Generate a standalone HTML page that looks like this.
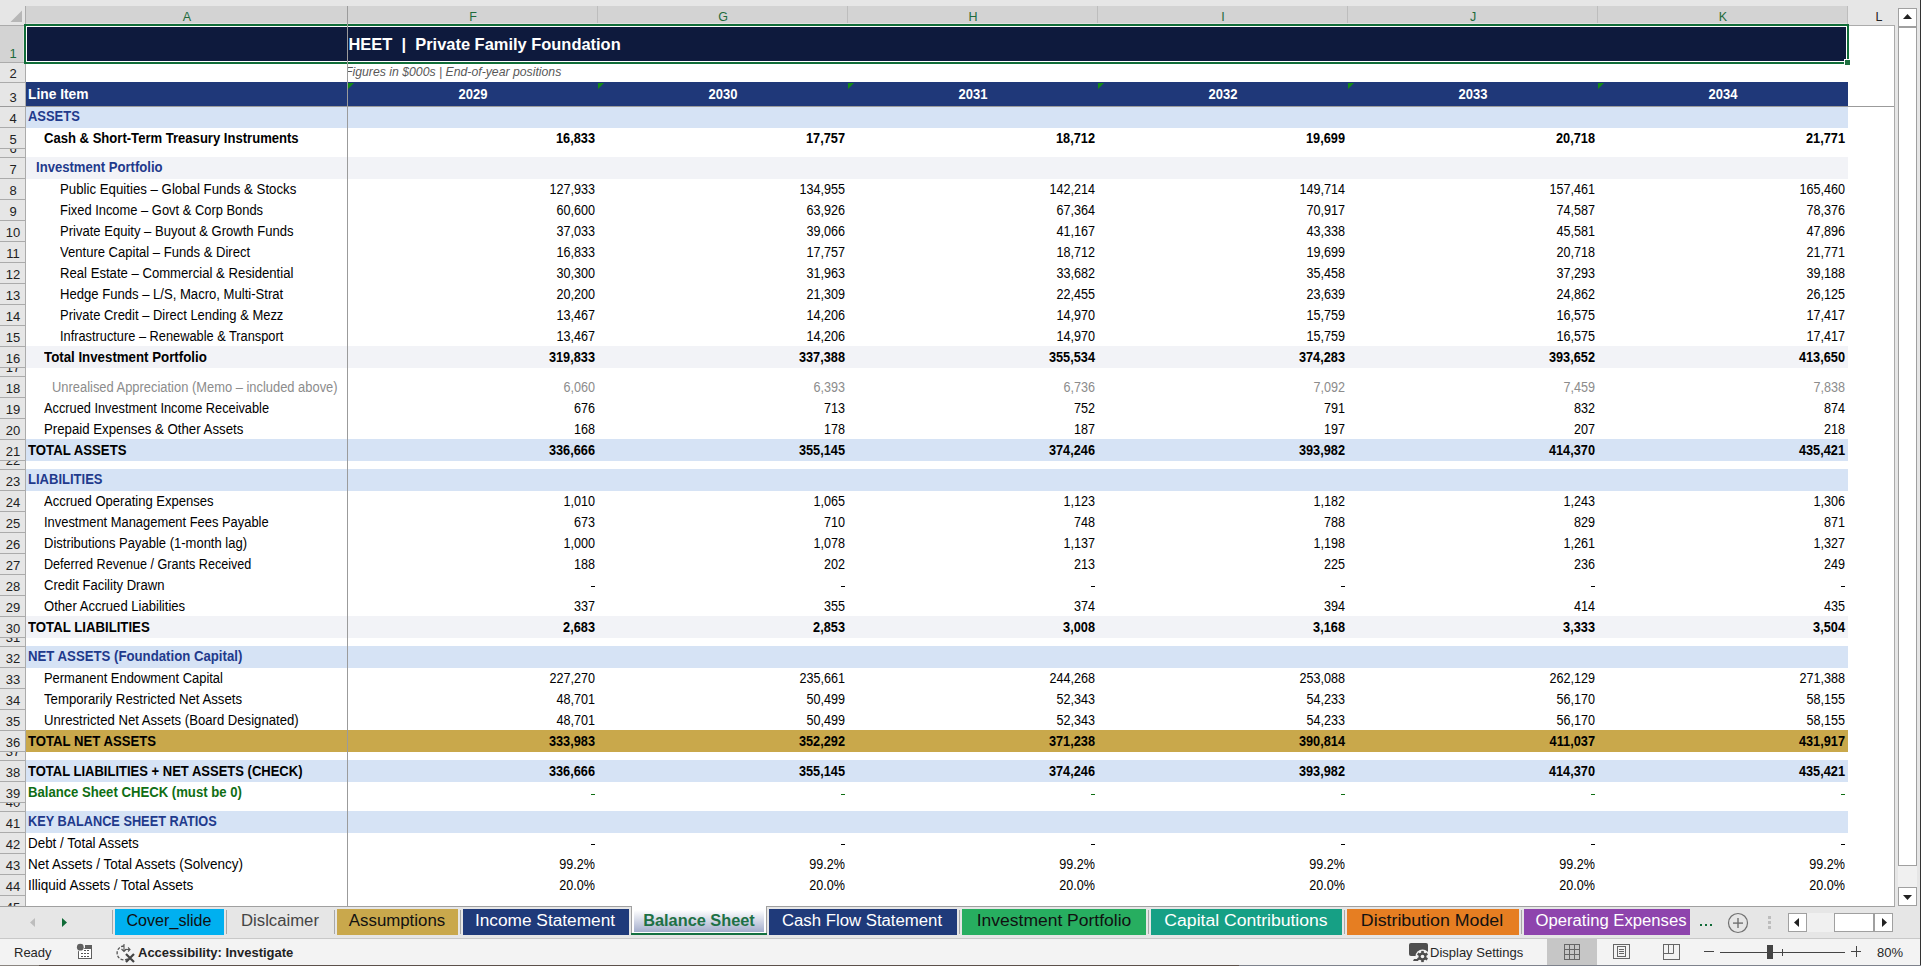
<!DOCTYPE html><html><head><meta charset="utf-8"><style>
html,body{margin:0;padding:0;}
body{width:1921px;height:966px;overflow:hidden;position:relative;background:#E6E6E6;font-family:"Liberation Sans",sans-serif;}
.t{position:absolute;white-space:pre;line-height:20px;font-family:"Liberation Sans",sans-serif;}
</style></head><body>
<div style="position:absolute;left:26px;top:26px;width:1868px;height:880px;background:#FFFFFF;"></div>
<div style="position:absolute;left:26px;top:25px;width:1822px;height:38px;background:#0E1A3D;"></div>
<div style="position:absolute;left:26px;top:82px;width:1822px;height:25px;background:#1F3879;"></div>
<div style="position:absolute;left:26px;top:106px;width:1822px;height:22px;background:#D6E3F5;"></div>
<div style="position:absolute;left:26px;top:439px;width:1822px;height:22px;background:#D6E3F5;"></div>
<div style="position:absolute;left:26px;top:469px;width:1822px;height:22px;background:#D6E3F5;"></div>
<div style="position:absolute;left:26px;top:646px;width:1822px;height:22px;background:#D6E3F5;"></div>
<div style="position:absolute;left:26px;top:760px;width:1822px;height:22px;background:#D6E3F5;"></div>
<div style="position:absolute;left:26px;top:811px;width:1822px;height:22px;background:#D6E3F5;"></div>
<div style="position:absolute;left:26px;top:157px;width:1822px;height:22px;background:#F2F3F7;"></div>
<div style="position:absolute;left:26px;top:346px;width:1822px;height:22px;background:#F2F3F7;"></div>
<div style="position:absolute;left:26px;top:616px;width:1822px;height:22px;background:#F2F3F7;"></div>
<div style="position:absolute;left:26px;top:730px;width:1822px;height:22px;background:#C9A84B;"></div>
<div style="position:absolute;left:26px;top:6px;width:1821px;height:18px;background:#D3D3D3;"></div>
<svg style="position:absolute;left:0;top:0" width="25" height="25"><polygon points="10.5,22 22,22 22,10.5" fill="#B7B7B7"/></svg>
<div style="position:absolute;left:597px;top:6px;width:1px;height:18px;background:#BDBDBD;"></div>
<div style="position:absolute;left:847px;top:6px;width:1px;height:18px;background:#BDBDBD;"></div>
<div style="position:absolute;left:1097px;top:6px;width:1px;height:18px;background:#BDBDBD;"></div>
<div style="position:absolute;left:1347px;top:6px;width:1px;height:18px;background:#BDBDBD;"></div>
<div style="position:absolute;left:1597px;top:6px;width:1px;height:18px;background:#BDBDBD;"></div>
<div style="position:absolute;left:1847px;top:6px;width:1px;height:18px;background:#BDBDBD;"></div>
<div style="position:absolute;left:25px;top:6px;width:1px;height:20px;background:#ABABAB;"></div>
<div style="position:absolute;left:0px;top:25px;width:26px;height:1px;background:#ABABAB;"></div>
<div style="position:absolute;left:1848px;top:25px;width:47px;height:1px;background:#ABABAB;"></div>
<div class="t" style="left:-13px;width:400px;text-align:center;top:6.67px;font-size:12.5px;font-weight:normal;color:#1E6B3C;">A</div>
<div class="t" style="left:273px;width:400px;text-align:center;top:6.67px;font-size:12.5px;font-weight:normal;color:#1E6B3C;">F</div>
<div class="t" style="left:523px;width:400px;text-align:center;top:6.67px;font-size:12.5px;font-weight:normal;color:#1E6B3C;">G</div>
<div class="t" style="left:773px;width:400px;text-align:center;top:6.67px;font-size:12.5px;font-weight:normal;color:#1E6B3C;">H</div>
<div class="t" style="left:1023px;width:400px;text-align:center;top:6.67px;font-size:12.5px;font-weight:normal;color:#1E6B3C;">I</div>
<div class="t" style="left:1273px;width:400px;text-align:center;top:6.67px;font-size:12.5px;font-weight:normal;color:#1E6B3C;">J</div>
<div class="t" style="left:1523px;width:400px;text-align:center;top:6.67px;font-size:12.5px;font-weight:normal;color:#1E6B3C;">K</div>
<div class="t" style="left:1679px;width:400px;text-align:center;top:6.67px;font-size:12.5px;font-weight:normal;color:#222;">L</div>
<div style="position:absolute;left:0px;top:26px;width:25px;height:880px;background:#E6E6E6;"></div>
<div style="position:absolute;left:0px;top:26px;width:25px;height:36px;background:#D3D3D3;"></div>
<div style="position:absolute;left:0px;top:62px;width:25px;height:1px;background:#ABABAB;"></div>
<div style="position:absolute;left:0px;top:82px;width:25px;height:1px;background:#ABABAB;"></div>
<div style="position:absolute;left:0px;top:106px;width:25px;height:1px;background:#ABABAB;"></div>
<div style="position:absolute;left:0px;top:127px;width:25px;height:1px;background:#ABABAB;"></div>
<div style="position:absolute;left:0px;top:148px;width:25px;height:1px;background:#ABABAB;"></div>
<div style="position:absolute;left:0px;top:157px;width:25px;height:1px;background:#ABABAB;"></div>
<div style="position:absolute;left:0px;top:178px;width:25px;height:1px;background:#ABABAB;"></div>
<div style="position:absolute;left:0px;top:199px;width:25px;height:1px;background:#ABABAB;"></div>
<div style="position:absolute;left:0px;top:220px;width:25px;height:1px;background:#ABABAB;"></div>
<div style="position:absolute;left:0px;top:241px;width:25px;height:1px;background:#ABABAB;"></div>
<div style="position:absolute;left:0px;top:262px;width:25px;height:1px;background:#ABABAB;"></div>
<div style="position:absolute;left:0px;top:283px;width:25px;height:1px;background:#ABABAB;"></div>
<div style="position:absolute;left:0px;top:304px;width:25px;height:1px;background:#ABABAB;"></div>
<div style="position:absolute;left:0px;top:325px;width:25px;height:1px;background:#ABABAB;"></div>
<div style="position:absolute;left:0px;top:346px;width:25px;height:1px;background:#ABABAB;"></div>
<div style="position:absolute;left:0px;top:367px;width:25px;height:1px;background:#ABABAB;"></div>
<div style="position:absolute;left:0px;top:376px;width:25px;height:1px;background:#ABABAB;"></div>
<div style="position:absolute;left:0px;top:397px;width:25px;height:1px;background:#ABABAB;"></div>
<div style="position:absolute;left:0px;top:418px;width:25px;height:1px;background:#ABABAB;"></div>
<div style="position:absolute;left:0px;top:439px;width:25px;height:1px;background:#ABABAB;"></div>
<div style="position:absolute;left:0px;top:460px;width:25px;height:1px;background:#ABABAB;"></div>
<div style="position:absolute;left:0px;top:469px;width:25px;height:1px;background:#ABABAB;"></div>
<div style="position:absolute;left:0px;top:490px;width:25px;height:1px;background:#ABABAB;"></div>
<div style="position:absolute;left:0px;top:511px;width:25px;height:1px;background:#ABABAB;"></div>
<div style="position:absolute;left:0px;top:532px;width:25px;height:1px;background:#ABABAB;"></div>
<div style="position:absolute;left:0px;top:553px;width:25px;height:1px;background:#ABABAB;"></div>
<div style="position:absolute;left:0px;top:574px;width:25px;height:1px;background:#ABABAB;"></div>
<div style="position:absolute;left:0px;top:595px;width:25px;height:1px;background:#ABABAB;"></div>
<div style="position:absolute;left:0px;top:616px;width:25px;height:1px;background:#ABABAB;"></div>
<div style="position:absolute;left:0px;top:637px;width:25px;height:1px;background:#ABABAB;"></div>
<div style="position:absolute;left:0px;top:646px;width:25px;height:1px;background:#ABABAB;"></div>
<div style="position:absolute;left:0px;top:667px;width:25px;height:1px;background:#ABABAB;"></div>
<div style="position:absolute;left:0px;top:688px;width:25px;height:1px;background:#ABABAB;"></div>
<div style="position:absolute;left:0px;top:709px;width:25px;height:1px;background:#ABABAB;"></div>
<div style="position:absolute;left:0px;top:730px;width:25px;height:1px;background:#ABABAB;"></div>
<div style="position:absolute;left:0px;top:751px;width:25px;height:1px;background:#ABABAB;"></div>
<div style="position:absolute;left:0px;top:760px;width:25px;height:1px;background:#ABABAB;"></div>
<div style="position:absolute;left:0px;top:781px;width:25px;height:1px;background:#ABABAB;"></div>
<div style="position:absolute;left:0px;top:802px;width:25px;height:1px;background:#ABABAB;"></div>
<div style="position:absolute;left:0px;top:811px;width:25px;height:1px;background:#ABABAB;"></div>
<div style="position:absolute;left:0px;top:832px;width:25px;height:1px;background:#ABABAB;"></div>
<div style="position:absolute;left:0px;top:853px;width:25px;height:1px;background:#ABABAB;"></div>
<div style="position:absolute;left:0px;top:874px;width:25px;height:1px;background:#ABABAB;"></div>
<div style="position:absolute;left:0px;top:895px;width:25px;height:1px;background:#ABABAB;"></div>
<div style="position:absolute;left:25px;top:26px;width:1px;height:880px;background:#ABABAB;"></div>
<div style="position:absolute;left:0;top:26px;width:25px;height:36px;overflow:hidden">
<div class="t" style="left:0;width:26px;text-align:center;top:17.50px;font-size:13px;color:#1E6B3C">1</div>
</div>
<div style="position:absolute;left:0;top:63px;width:25px;height:19px;overflow:hidden">
<div class="t" style="left:0;width:26px;text-align:center;top:0.50px;font-size:13px;color:#222">2</div>
</div>
<div style="position:absolute;left:0;top:83px;width:25px;height:23px;overflow:hidden">
<div class="t" style="left:0;width:26px;text-align:center;top:4.50px;font-size:13px;color:#222">3</div>
</div>
<div style="position:absolute;left:0;top:107px;width:25px;height:20px;overflow:hidden">
<div class="t" style="left:0;width:26px;text-align:center;top:1.50px;font-size:13px;color:#222">4</div>
</div>
<div style="position:absolute;left:0;top:128px;width:25px;height:20px;overflow:hidden">
<div class="t" style="left:0;width:26px;text-align:center;top:1.50px;font-size:13px;color:#222">5</div>
</div>
<div style="position:absolute;left:0;top:149px;width:25px;height:8px;overflow:hidden">
<div class="t" style="left:0;width:26px;text-align:center;top:-10.50px;font-size:13px;color:#222">6</div>
</div>
<div style="position:absolute;left:0;top:158px;width:25px;height:20px;overflow:hidden">
<div class="t" style="left:0;width:26px;text-align:center;top:1.50px;font-size:13px;color:#222">7</div>
</div>
<div style="position:absolute;left:0;top:179px;width:25px;height:20px;overflow:hidden">
<div class="t" style="left:0;width:26px;text-align:center;top:1.50px;font-size:13px;color:#222">8</div>
</div>
<div style="position:absolute;left:0;top:200px;width:25px;height:20px;overflow:hidden">
<div class="t" style="left:0;width:26px;text-align:center;top:1.50px;font-size:13px;color:#222">9</div>
</div>
<div style="position:absolute;left:0;top:221px;width:25px;height:20px;overflow:hidden">
<div class="t" style="left:0;width:26px;text-align:center;top:1.50px;font-size:13px;color:#222">10</div>
</div>
<div style="position:absolute;left:0;top:242px;width:25px;height:20px;overflow:hidden">
<div class="t" style="left:0;width:26px;text-align:center;top:1.50px;font-size:13px;color:#222">11</div>
</div>
<div style="position:absolute;left:0;top:263px;width:25px;height:20px;overflow:hidden">
<div class="t" style="left:0;width:26px;text-align:center;top:1.50px;font-size:13px;color:#222">12</div>
</div>
<div style="position:absolute;left:0;top:284px;width:25px;height:20px;overflow:hidden">
<div class="t" style="left:0;width:26px;text-align:center;top:1.50px;font-size:13px;color:#222">13</div>
</div>
<div style="position:absolute;left:0;top:305px;width:25px;height:20px;overflow:hidden">
<div class="t" style="left:0;width:26px;text-align:center;top:1.50px;font-size:13px;color:#222">14</div>
</div>
<div style="position:absolute;left:0;top:326px;width:25px;height:20px;overflow:hidden">
<div class="t" style="left:0;width:26px;text-align:center;top:1.50px;font-size:13px;color:#222">15</div>
</div>
<div style="position:absolute;left:0;top:347px;width:25px;height:20px;overflow:hidden">
<div class="t" style="left:0;width:26px;text-align:center;top:1.50px;font-size:13px;color:#222">16</div>
</div>
<div style="position:absolute;left:0;top:368px;width:25px;height:8px;overflow:hidden">
<div class="t" style="left:0;width:26px;text-align:center;top:-10.50px;font-size:13px;color:#222">17</div>
</div>
<div style="position:absolute;left:0;top:377px;width:25px;height:20px;overflow:hidden">
<div class="t" style="left:0;width:26px;text-align:center;top:1.50px;font-size:13px;color:#222">18</div>
</div>
<div style="position:absolute;left:0;top:398px;width:25px;height:20px;overflow:hidden">
<div class="t" style="left:0;width:26px;text-align:center;top:1.50px;font-size:13px;color:#222">19</div>
</div>
<div style="position:absolute;left:0;top:419px;width:25px;height:20px;overflow:hidden">
<div class="t" style="left:0;width:26px;text-align:center;top:1.50px;font-size:13px;color:#222">20</div>
</div>
<div style="position:absolute;left:0;top:440px;width:25px;height:20px;overflow:hidden">
<div class="t" style="left:0;width:26px;text-align:center;top:1.50px;font-size:13px;color:#222">21</div>
</div>
<div style="position:absolute;left:0;top:461px;width:25px;height:8px;overflow:hidden">
<div class="t" style="left:0;width:26px;text-align:center;top:-10.50px;font-size:13px;color:#222">22</div>
</div>
<div style="position:absolute;left:0;top:470px;width:25px;height:20px;overflow:hidden">
<div class="t" style="left:0;width:26px;text-align:center;top:1.50px;font-size:13px;color:#222">23</div>
</div>
<div style="position:absolute;left:0;top:491px;width:25px;height:20px;overflow:hidden">
<div class="t" style="left:0;width:26px;text-align:center;top:1.50px;font-size:13px;color:#222">24</div>
</div>
<div style="position:absolute;left:0;top:512px;width:25px;height:20px;overflow:hidden">
<div class="t" style="left:0;width:26px;text-align:center;top:1.50px;font-size:13px;color:#222">25</div>
</div>
<div style="position:absolute;left:0;top:533px;width:25px;height:20px;overflow:hidden">
<div class="t" style="left:0;width:26px;text-align:center;top:1.50px;font-size:13px;color:#222">26</div>
</div>
<div style="position:absolute;left:0;top:554px;width:25px;height:20px;overflow:hidden">
<div class="t" style="left:0;width:26px;text-align:center;top:1.50px;font-size:13px;color:#222">27</div>
</div>
<div style="position:absolute;left:0;top:575px;width:25px;height:20px;overflow:hidden">
<div class="t" style="left:0;width:26px;text-align:center;top:1.50px;font-size:13px;color:#222">28</div>
</div>
<div style="position:absolute;left:0;top:596px;width:25px;height:20px;overflow:hidden">
<div class="t" style="left:0;width:26px;text-align:center;top:1.50px;font-size:13px;color:#222">29</div>
</div>
<div style="position:absolute;left:0;top:617px;width:25px;height:20px;overflow:hidden">
<div class="t" style="left:0;width:26px;text-align:center;top:1.50px;font-size:13px;color:#222">30</div>
</div>
<div style="position:absolute;left:0;top:638px;width:25px;height:8px;overflow:hidden">
<div class="t" style="left:0;width:26px;text-align:center;top:-10.50px;font-size:13px;color:#222">31</div>
</div>
<div style="position:absolute;left:0;top:647px;width:25px;height:20px;overflow:hidden">
<div class="t" style="left:0;width:26px;text-align:center;top:1.50px;font-size:13px;color:#222">32</div>
</div>
<div style="position:absolute;left:0;top:668px;width:25px;height:20px;overflow:hidden">
<div class="t" style="left:0;width:26px;text-align:center;top:1.50px;font-size:13px;color:#222">33</div>
</div>
<div style="position:absolute;left:0;top:689px;width:25px;height:20px;overflow:hidden">
<div class="t" style="left:0;width:26px;text-align:center;top:1.50px;font-size:13px;color:#222">34</div>
</div>
<div style="position:absolute;left:0;top:710px;width:25px;height:20px;overflow:hidden">
<div class="t" style="left:0;width:26px;text-align:center;top:1.50px;font-size:13px;color:#222">35</div>
</div>
<div style="position:absolute;left:0;top:731px;width:25px;height:20px;overflow:hidden">
<div class="t" style="left:0;width:26px;text-align:center;top:1.50px;font-size:13px;color:#222">36</div>
</div>
<div style="position:absolute;left:0;top:752px;width:25px;height:8px;overflow:hidden">
<div class="t" style="left:0;width:26px;text-align:center;top:-10.50px;font-size:13px;color:#222">37</div>
</div>
<div style="position:absolute;left:0;top:761px;width:25px;height:20px;overflow:hidden">
<div class="t" style="left:0;width:26px;text-align:center;top:1.50px;font-size:13px;color:#222">38</div>
</div>
<div style="position:absolute;left:0;top:782px;width:25px;height:20px;overflow:hidden">
<div class="t" style="left:0;width:26px;text-align:center;top:1.50px;font-size:13px;color:#222">39</div>
</div>
<div style="position:absolute;left:0;top:803px;width:25px;height:8px;overflow:hidden">
<div class="t" style="left:0;width:26px;text-align:center;top:-10.50px;font-size:13px;color:#222">40</div>
</div>
<div style="position:absolute;left:0;top:812px;width:25px;height:20px;overflow:hidden">
<div class="t" style="left:0;width:26px;text-align:center;top:1.50px;font-size:13px;color:#222">41</div>
</div>
<div style="position:absolute;left:0;top:833px;width:25px;height:20px;overflow:hidden">
<div class="t" style="left:0;width:26px;text-align:center;top:1.50px;font-size:13px;color:#222">42</div>
</div>
<div style="position:absolute;left:0;top:854px;width:25px;height:20px;overflow:hidden">
<div class="t" style="left:0;width:26px;text-align:center;top:1.50px;font-size:13px;color:#222">43</div>
</div>
<div style="position:absolute;left:0;top:875px;width:25px;height:20px;overflow:hidden">
<div class="t" style="left:0;width:26px;text-align:center;top:1.50px;font-size:13px;color:#222">44</div>
</div>
<div style="position:absolute;left:0;top:896px;width:25px;height:10px;overflow:hidden">
<div class="t" style="left:0;width:26px;text-align:center;top:1.50px;font-size:13px;color:#222">45</div>
</div>
<div style="position:absolute;left:347px;top:6px;width:1px;height:900px;background:#9B9B9B;"></div>
<div style="position:absolute;left:0px;top:106px;width:1894px;height:1px;background:#9B9B9B;"></div>
<div style="position:absolute;left:1894px;top:25px;width:1px;height:882px;background:#ABABAB;"></div>
<div class="t" style="left:348.5px;top:34.30px;font-size:16.45px;font-weight:bold;color:#FFFFFF;">HEET  |  Private Family Foundation</div>
<div style="position:absolute;left:348px;top:63px;width:400px;height:19px;overflow:hidden">
<div class="t" style="left:-3px;top:-1.24px;font-size:12.25px;font-style:italic;color:#595959">Figures in $000s | End-of-year positions</div>
</div>
<div class="t" style="left:28px;top:85.22px;font-size:13.8px;font-weight:bold;color:#FFFFFF;">Line Item</div>
<div class="t" style="left:272.5px;width:400px;text-align:center;top:85.22px;font-size:13.8px;font-weight:bold;color:#FFFFFF;transform:scaleX(0.94);transform-origin:50% 50%;">2029</div>
<div class="t" style="left:522.5px;width:400px;text-align:center;top:85.22px;font-size:13.8px;font-weight:bold;color:#FFFFFF;transform:scaleX(0.94);transform-origin:50% 50%;">2030</div>
<div class="t" style="left:772.5px;width:400px;text-align:center;top:85.22px;font-size:13.8px;font-weight:bold;color:#FFFFFF;transform:scaleX(0.94);transform-origin:50% 50%;">2031</div>
<div class="t" style="left:1022.5px;width:400px;text-align:center;top:85.22px;font-size:13.8px;font-weight:bold;color:#FFFFFF;transform:scaleX(0.94);transform-origin:50% 50%;">2032</div>
<div class="t" style="left:1272.5px;width:400px;text-align:center;top:85.22px;font-size:13.8px;font-weight:bold;color:#FFFFFF;transform:scaleX(0.94);transform-origin:50% 50%;">2033</div>
<div class="t" style="left:1522.5px;width:400px;text-align:center;top:85.22px;font-size:13.8px;font-weight:bold;color:#FFFFFF;transform:scaleX(0.94);transform-origin:50% 50%;">2034</div>
<svg style="position:absolute;left:348px;top:83px" width="7" height="7"><polygon points="0,0 6,0 0,6" fill="#138A13"/></svg>
<svg style="position:absolute;left:598px;top:83px" width="7" height="7"><polygon points="0,0 6,0 0,6" fill="#138A13"/></svg>
<svg style="position:absolute;left:848px;top:83px" width="7" height="7"><polygon points="0,0 6,0 0,6" fill="#138A13"/></svg>
<svg style="position:absolute;left:1098px;top:83px" width="7" height="7"><polygon points="0,0 6,0 0,6" fill="#138A13"/></svg>
<svg style="position:absolute;left:1348px;top:83px" width="7" height="7"><polygon points="0,0 6,0 0,6" fill="#138A13"/></svg>
<svg style="position:absolute;left:1598px;top:83px" width="7" height="7"><polygon points="0,0 6,0 0,6" fill="#138A13"/></svg>
<div class="t" style="left:28px;top:107.22px;font-size:13.8px;font-weight:bold;color:#1F3A8C;transform:scaleX(0.9384434782608695);transform-origin:0 50%;">ASSETS</div>
<div class="t" style="left:44px;top:129.22px;font-size:13.8px;font-weight:bold;color:#000;transform:scaleX(0.9471478260869564);transform-origin:0 50%;">Cash &amp; Short-Term Treasury Instruments</div>
<div class="t" style="left:195px;width:400px;text-align:right;top:129.22px;font-size:13.8px;font-weight:bold;color:#000;transform:scaleX(0.9239130434782609);transform-origin:100% 50%;">16,833</div>
<div class="t" style="left:445px;width:400px;text-align:right;top:129.22px;font-size:13.8px;font-weight:bold;color:#000;transform:scaleX(0.9239130434782609);transform-origin:100% 50%;">17,757</div>
<div class="t" style="left:695px;width:400px;text-align:right;top:129.22px;font-size:13.8px;font-weight:bold;color:#000;transform:scaleX(0.9239130434782609);transform-origin:100% 50%;">18,712</div>
<div class="t" style="left:945px;width:400px;text-align:right;top:129.22px;font-size:13.8px;font-weight:bold;color:#000;transform:scaleX(0.9239130434782609);transform-origin:100% 50%;">19,699</div>
<div class="t" style="left:1195px;width:400px;text-align:right;top:129.22px;font-size:13.8px;font-weight:bold;color:#000;transform:scaleX(0.9239130434782609);transform-origin:100% 50%;">20,718</div>
<div class="t" style="left:1445px;width:400px;text-align:right;top:129.22px;font-size:13.8px;font-weight:bold;color:#000;transform:scaleX(0.9239130434782609);transform-origin:100% 50%;">21,771</div>
<div class="t" style="left:36px;top:158.22px;font-size:13.8px;font-weight:bold;color:#1F3A8C;transform:scaleX(0.9490608695652173);transform-origin:0 50%;">Investment Portfolio</div>
<div class="t" style="left:60px;top:180.22px;font-size:13.8px;font-weight:normal;color:#000;transform:scaleX(0.9599275362318839);transform-origin:0 50%;">Public Equities – Global Funds &amp; Stocks</div>
<div class="t" style="left:195px;width:400px;text-align:right;top:180.22px;font-size:13.8px;font-weight:normal;color:#000;transform:scaleX(0.9130434782608695);transform-origin:100% 50%;">127,933</div>
<div class="t" style="left:445px;width:400px;text-align:right;top:180.22px;font-size:13.8px;font-weight:normal;color:#000;transform:scaleX(0.9130434782608695);transform-origin:100% 50%;">134,955</div>
<div class="t" style="left:695px;width:400px;text-align:right;top:180.22px;font-size:13.8px;font-weight:normal;color:#000;transform:scaleX(0.9130434782608695);transform-origin:100% 50%;">142,214</div>
<div class="t" style="left:945px;width:400px;text-align:right;top:180.22px;font-size:13.8px;font-weight:normal;color:#000;transform:scaleX(0.9130434782608695);transform-origin:100% 50%;">149,714</div>
<div class="t" style="left:1195px;width:400px;text-align:right;top:180.22px;font-size:13.8px;font-weight:normal;color:#000;transform:scaleX(0.9130434782608695);transform-origin:100% 50%;">157,461</div>
<div class="t" style="left:1445px;width:400px;text-align:right;top:180.22px;font-size:13.8px;font-weight:normal;color:#000;transform:scaleX(0.9130434782608695);transform-origin:100% 50%;">165,460</div>
<div class="t" style="left:60px;top:201.22px;font-size:13.8px;font-weight:normal;color:#000;transform:scaleX(0.9356231884057971);transform-origin:0 50%;">Fixed Income – Govt &amp; Corp Bonds</div>
<div class="t" style="left:195px;width:400px;text-align:right;top:201.22px;font-size:13.8px;font-weight:normal;color:#000;transform:scaleX(0.9130434782608695);transform-origin:100% 50%;">60,600</div>
<div class="t" style="left:445px;width:400px;text-align:right;top:201.22px;font-size:13.8px;font-weight:normal;color:#000;transform:scaleX(0.9130434782608695);transform-origin:100% 50%;">63,926</div>
<div class="t" style="left:695px;width:400px;text-align:right;top:201.22px;font-size:13.8px;font-weight:normal;color:#000;transform:scaleX(0.9130434782608695);transform-origin:100% 50%;">67,364</div>
<div class="t" style="left:945px;width:400px;text-align:right;top:201.22px;font-size:13.8px;font-weight:normal;color:#000;transform:scaleX(0.9130434782608695);transform-origin:100% 50%;">70,917</div>
<div class="t" style="left:1195px;width:400px;text-align:right;top:201.22px;font-size:13.8px;font-weight:normal;color:#000;transform:scaleX(0.9130434782608695);transform-origin:100% 50%;">74,587</div>
<div class="t" style="left:1445px;width:400px;text-align:right;top:201.22px;font-size:13.8px;font-weight:normal;color:#000;transform:scaleX(0.9130434782608695);transform-origin:100% 50%;">78,376</div>
<div class="t" style="left:60px;top:222.22px;font-size:13.8px;font-weight:normal;color:#000;transform:scaleX(0.945231884057971);transform-origin:0 50%;">Private Equity – Buyout &amp; Growth Funds</div>
<div class="t" style="left:195px;width:400px;text-align:right;top:222.22px;font-size:13.8px;font-weight:normal;color:#000;transform:scaleX(0.9130434782608695);transform-origin:100% 50%;">37,033</div>
<div class="t" style="left:445px;width:400px;text-align:right;top:222.22px;font-size:13.8px;font-weight:normal;color:#000;transform:scaleX(0.9130434782608695);transform-origin:100% 50%;">39,066</div>
<div class="t" style="left:695px;width:400px;text-align:right;top:222.22px;font-size:13.8px;font-weight:normal;color:#000;transform:scaleX(0.9130434782608695);transform-origin:100% 50%;">41,167</div>
<div class="t" style="left:945px;width:400px;text-align:right;top:222.22px;font-size:13.8px;font-weight:normal;color:#000;transform:scaleX(0.9130434782608695);transform-origin:100% 50%;">43,338</div>
<div class="t" style="left:1195px;width:400px;text-align:right;top:222.22px;font-size:13.8px;font-weight:normal;color:#000;transform:scaleX(0.9130434782608695);transform-origin:100% 50%;">45,581</div>
<div class="t" style="left:1445px;width:400px;text-align:right;top:222.22px;font-size:13.8px;font-weight:normal;color:#000;transform:scaleX(0.9130434782608695);transform-origin:100% 50%;">47,896</div>
<div class="t" style="left:60px;top:243.22px;font-size:13.8px;font-weight:normal;color:#000;transform:scaleX(0.9459855072463768);transform-origin:0 50%;">Venture Capital – Funds &amp; Direct</div>
<div class="t" style="left:195px;width:400px;text-align:right;top:243.22px;font-size:13.8px;font-weight:normal;color:#000;transform:scaleX(0.9130434782608695);transform-origin:100% 50%;">16,833</div>
<div class="t" style="left:445px;width:400px;text-align:right;top:243.22px;font-size:13.8px;font-weight:normal;color:#000;transform:scaleX(0.9130434782608695);transform-origin:100% 50%;">17,757</div>
<div class="t" style="left:695px;width:400px;text-align:right;top:243.22px;font-size:13.8px;font-weight:normal;color:#000;transform:scaleX(0.9130434782608695);transform-origin:100% 50%;">18,712</div>
<div class="t" style="left:945px;width:400px;text-align:right;top:243.22px;font-size:13.8px;font-weight:normal;color:#000;transform:scaleX(0.9130434782608695);transform-origin:100% 50%;">19,699</div>
<div class="t" style="left:1195px;width:400px;text-align:right;top:243.22px;font-size:13.8px;font-weight:normal;color:#000;transform:scaleX(0.9130434782608695);transform-origin:100% 50%;">20,718</div>
<div class="t" style="left:1445px;width:400px;text-align:right;top:243.22px;font-size:13.8px;font-weight:normal;color:#000;transform:scaleX(0.9130434782608695);transform-origin:100% 50%;">21,771</div>
<div class="t" style="left:60px;top:264.22px;font-size:13.8px;font-weight:normal;color:#000;transform:scaleX(0.9509782608695652);transform-origin:0 50%;">Real Estate – Commercial &amp; Residential</div>
<div class="t" style="left:195px;width:400px;text-align:right;top:264.22px;font-size:13.8px;font-weight:normal;color:#000;transform:scaleX(0.9130434782608695);transform-origin:100% 50%;">30,300</div>
<div class="t" style="left:445px;width:400px;text-align:right;top:264.22px;font-size:13.8px;font-weight:normal;color:#000;transform:scaleX(0.9130434782608695);transform-origin:100% 50%;">31,963</div>
<div class="t" style="left:695px;width:400px;text-align:right;top:264.22px;font-size:13.8px;font-weight:normal;color:#000;transform:scaleX(0.9130434782608695);transform-origin:100% 50%;">33,682</div>
<div class="t" style="left:945px;width:400px;text-align:right;top:264.22px;font-size:13.8px;font-weight:normal;color:#000;transform:scaleX(0.9130434782608695);transform-origin:100% 50%;">35,458</div>
<div class="t" style="left:1195px;width:400px;text-align:right;top:264.22px;font-size:13.8px;font-weight:normal;color:#000;transform:scaleX(0.9130434782608695);transform-origin:100% 50%;">37,293</div>
<div class="t" style="left:1445px;width:400px;text-align:right;top:264.22px;font-size:13.8px;font-weight:normal;color:#000;transform:scaleX(0.9130434782608695);transform-origin:100% 50%;">39,188</div>
<div class="t" style="left:60px;top:285.22px;font-size:13.8px;font-weight:normal;color:#000;transform:scaleX(0.9480579710144927);transform-origin:0 50%;">Hedge Funds – L/S, Macro, Multi-Strat</div>
<div class="t" style="left:195px;width:400px;text-align:right;top:285.22px;font-size:13.8px;font-weight:normal;color:#000;transform:scaleX(0.9130434782608695);transform-origin:100% 50%;">20,200</div>
<div class="t" style="left:445px;width:400px;text-align:right;top:285.22px;font-size:13.8px;font-weight:normal;color:#000;transform:scaleX(0.9130434782608695);transform-origin:100% 50%;">21,309</div>
<div class="t" style="left:695px;width:400px;text-align:right;top:285.22px;font-size:13.8px;font-weight:normal;color:#000;transform:scaleX(0.9130434782608695);transform-origin:100% 50%;">22,455</div>
<div class="t" style="left:945px;width:400px;text-align:right;top:285.22px;font-size:13.8px;font-weight:normal;color:#000;transform:scaleX(0.9130434782608695);transform-origin:100% 50%;">23,639</div>
<div class="t" style="left:1195px;width:400px;text-align:right;top:285.22px;font-size:13.8px;font-weight:normal;color:#000;transform:scaleX(0.9130434782608695);transform-origin:100% 50%;">24,862</div>
<div class="t" style="left:1445px;width:400px;text-align:right;top:285.22px;font-size:13.8px;font-weight:normal;color:#000;transform:scaleX(0.9130434782608695);transform-origin:100% 50%;">26,125</div>
<div class="t" style="left:60px;top:306.22px;font-size:13.8px;font-weight:normal;color:#000;transform:scaleX(0.9395797101449274);transform-origin:0 50%;">Private Credit – Direct Lending &amp; Mezz</div>
<div class="t" style="left:195px;width:400px;text-align:right;top:306.22px;font-size:13.8px;font-weight:normal;color:#000;transform:scaleX(0.9130434782608695);transform-origin:100% 50%;">13,467</div>
<div class="t" style="left:445px;width:400px;text-align:right;top:306.22px;font-size:13.8px;font-weight:normal;color:#000;transform:scaleX(0.9130434782608695);transform-origin:100% 50%;">14,206</div>
<div class="t" style="left:695px;width:400px;text-align:right;top:306.22px;font-size:13.8px;font-weight:normal;color:#000;transform:scaleX(0.9130434782608695);transform-origin:100% 50%;">14,970</div>
<div class="t" style="left:945px;width:400px;text-align:right;top:306.22px;font-size:13.8px;font-weight:normal;color:#000;transform:scaleX(0.9130434782608695);transform-origin:100% 50%;">15,759</div>
<div class="t" style="left:1195px;width:400px;text-align:right;top:306.22px;font-size:13.8px;font-weight:normal;color:#000;transform:scaleX(0.9130434782608695);transform-origin:100% 50%;">16,575</div>
<div class="t" style="left:1445px;width:400px;text-align:right;top:306.22px;font-size:13.8px;font-weight:normal;color:#000;transform:scaleX(0.9130434782608695);transform-origin:100% 50%;">17,417</div>
<div class="t" style="left:60px;top:327.22px;font-size:13.8px;font-weight:normal;color:#000;transform:scaleX(0.9271449275362318);transform-origin:0 50%;">Infrastructure – Renewable &amp; Transport</div>
<div class="t" style="left:195px;width:400px;text-align:right;top:327.22px;font-size:13.8px;font-weight:normal;color:#000;transform:scaleX(0.9130434782608695);transform-origin:100% 50%;">13,467</div>
<div class="t" style="left:445px;width:400px;text-align:right;top:327.22px;font-size:13.8px;font-weight:normal;color:#000;transform:scaleX(0.9130434782608695);transform-origin:100% 50%;">14,206</div>
<div class="t" style="left:695px;width:400px;text-align:right;top:327.22px;font-size:13.8px;font-weight:normal;color:#000;transform:scaleX(0.9130434782608695);transform-origin:100% 50%;">14,970</div>
<div class="t" style="left:945px;width:400px;text-align:right;top:327.22px;font-size:13.8px;font-weight:normal;color:#000;transform:scaleX(0.9130434782608695);transform-origin:100% 50%;">15,759</div>
<div class="t" style="left:1195px;width:400px;text-align:right;top:327.22px;font-size:13.8px;font-weight:normal;color:#000;transform:scaleX(0.9130434782608695);transform-origin:100% 50%;">16,575</div>
<div class="t" style="left:1445px;width:400px;text-align:right;top:327.22px;font-size:13.8px;font-weight:normal;color:#000;transform:scaleX(0.9130434782608695);transform-origin:100% 50%;">17,417</div>
<div class="t" style="left:44px;top:348.22px;font-size:13.8px;font-weight:bold;color:#000;transform:scaleX(0.9624521739130434);transform-origin:0 50%;">Total Investment Portfolio</div>
<div class="t" style="left:195px;width:400px;text-align:right;top:348.22px;font-size:13.8px;font-weight:bold;color:#000;transform:scaleX(0.9239130434782609);transform-origin:100% 50%;">319,833</div>
<div class="t" style="left:445px;width:400px;text-align:right;top:348.22px;font-size:13.8px;font-weight:bold;color:#000;transform:scaleX(0.9239130434782609);transform-origin:100% 50%;">337,388</div>
<div class="t" style="left:695px;width:400px;text-align:right;top:348.22px;font-size:13.8px;font-weight:bold;color:#000;transform:scaleX(0.9239130434782609);transform-origin:100% 50%;">355,534</div>
<div class="t" style="left:945px;width:400px;text-align:right;top:348.22px;font-size:13.8px;font-weight:bold;color:#000;transform:scaleX(0.9239130434782609);transform-origin:100% 50%;">374,283</div>
<div class="t" style="left:1195px;width:400px;text-align:right;top:348.22px;font-size:13.8px;font-weight:bold;color:#000;transform:scaleX(0.9239130434782609);transform-origin:100% 50%;">393,652</div>
<div class="t" style="left:1445px;width:400px;text-align:right;top:348.22px;font-size:13.8px;font-weight:bold;color:#000;transform:scaleX(0.9239130434782609);transform-origin:100% 50%;">413,650</div>
<div class="t" style="left:52px;top:378.22px;font-size:13.8px;font-weight:normal;color:#8C8C8C;transform:scaleX(0.9355289855072463);transform-origin:0 50%;">Unrealised Appreciation (Memo – included above)</div>
<div class="t" style="left:195px;width:400px;text-align:right;top:378.22px;font-size:13.8px;font-weight:normal;color:#8C8C8C;transform:scaleX(0.9130434782608695);transform-origin:100% 50%;">6,060</div>
<div class="t" style="left:445px;width:400px;text-align:right;top:378.22px;font-size:13.8px;font-weight:normal;color:#8C8C8C;transform:scaleX(0.9130434782608695);transform-origin:100% 50%;">6,393</div>
<div class="t" style="left:695px;width:400px;text-align:right;top:378.22px;font-size:13.8px;font-weight:normal;color:#8C8C8C;transform:scaleX(0.9130434782608695);transform-origin:100% 50%;">6,736</div>
<div class="t" style="left:945px;width:400px;text-align:right;top:378.22px;font-size:13.8px;font-weight:normal;color:#8C8C8C;transform:scaleX(0.9130434782608695);transform-origin:100% 50%;">7,092</div>
<div class="t" style="left:1195px;width:400px;text-align:right;top:378.22px;font-size:13.8px;font-weight:normal;color:#8C8C8C;transform:scaleX(0.9130434782608695);transform-origin:100% 50%;">7,459</div>
<div class="t" style="left:1445px;width:400px;text-align:right;top:378.22px;font-size:13.8px;font-weight:normal;color:#8C8C8C;transform:scaleX(0.9130434782608695);transform-origin:100% 50%;">7,838</div>
<div class="t" style="left:44px;top:399.22px;font-size:13.8px;font-weight:normal;color:#000;transform:scaleX(0.9255434782608696);transform-origin:0 50%;">Accrued Investment Income Receivable</div>
<div class="t" style="left:195px;width:400px;text-align:right;top:399.22px;font-size:13.8px;font-weight:normal;color:#000;transform:scaleX(0.9130434782608695);transform-origin:100% 50%;">676</div>
<div class="t" style="left:445px;width:400px;text-align:right;top:399.22px;font-size:13.8px;font-weight:normal;color:#000;transform:scaleX(0.9130434782608695);transform-origin:100% 50%;">713</div>
<div class="t" style="left:695px;width:400px;text-align:right;top:399.22px;font-size:13.8px;font-weight:normal;color:#000;transform:scaleX(0.9130434782608695);transform-origin:100% 50%;">752</div>
<div class="t" style="left:945px;width:400px;text-align:right;top:399.22px;font-size:13.8px;font-weight:normal;color:#000;transform:scaleX(0.9130434782608695);transform-origin:100% 50%;">791</div>
<div class="t" style="left:1195px;width:400px;text-align:right;top:399.22px;font-size:13.8px;font-weight:normal;color:#000;transform:scaleX(0.9130434782608695);transform-origin:100% 50%;">832</div>
<div class="t" style="left:1445px;width:400px;text-align:right;top:399.22px;font-size:13.8px;font-weight:normal;color:#000;transform:scaleX(0.9130434782608695);transform-origin:100% 50%;">874</div>
<div class="t" style="left:44px;top:420.22px;font-size:13.8px;font-weight:normal;color:#000;transform:scaleX(0.9588913043478261);transform-origin:0 50%;">Prepaid Expenses &amp; Other Assets</div>
<div class="t" style="left:195px;width:400px;text-align:right;top:420.22px;font-size:13.8px;font-weight:normal;color:#000;transform:scaleX(0.9130434782608695);transform-origin:100% 50%;">168</div>
<div class="t" style="left:445px;width:400px;text-align:right;top:420.22px;font-size:13.8px;font-weight:normal;color:#000;transform:scaleX(0.9130434782608695);transform-origin:100% 50%;">178</div>
<div class="t" style="left:695px;width:400px;text-align:right;top:420.22px;font-size:13.8px;font-weight:normal;color:#000;transform:scaleX(0.9130434782608695);transform-origin:100% 50%;">187</div>
<div class="t" style="left:945px;width:400px;text-align:right;top:420.22px;font-size:13.8px;font-weight:normal;color:#000;transform:scaleX(0.9130434782608695);transform-origin:100% 50%;">197</div>
<div class="t" style="left:1195px;width:400px;text-align:right;top:420.22px;font-size:13.8px;font-weight:normal;color:#000;transform:scaleX(0.9130434782608695);transform-origin:100% 50%;">207</div>
<div class="t" style="left:1445px;width:400px;text-align:right;top:420.22px;font-size:13.8px;font-weight:normal;color:#000;transform:scaleX(0.9130434782608695);transform-origin:100% 50%;">218</div>
<div class="t" style="left:28px;top:441.22px;font-size:13.8px;font-weight:bold;color:#000;transform:scaleX(0.9565217391304347);transform-origin:0 50%;">TOTAL ASSETS</div>
<div class="t" style="left:195px;width:400px;text-align:right;top:441.22px;font-size:13.8px;font-weight:bold;color:#000;transform:scaleX(0.9239130434782609);transform-origin:100% 50%;">336,666</div>
<div class="t" style="left:445px;width:400px;text-align:right;top:441.22px;font-size:13.8px;font-weight:bold;color:#000;transform:scaleX(0.9239130434782609);transform-origin:100% 50%;">355,145</div>
<div class="t" style="left:695px;width:400px;text-align:right;top:441.22px;font-size:13.8px;font-weight:bold;color:#000;transform:scaleX(0.9239130434782609);transform-origin:100% 50%;">374,246</div>
<div class="t" style="left:945px;width:400px;text-align:right;top:441.22px;font-size:13.8px;font-weight:bold;color:#000;transform:scaleX(0.9239130434782609);transform-origin:100% 50%;">393,982</div>
<div class="t" style="left:1195px;width:400px;text-align:right;top:441.22px;font-size:13.8px;font-weight:bold;color:#000;transform:scaleX(0.9239130434782609);transform-origin:100% 50%;">414,370</div>
<div class="t" style="left:1445px;width:400px;text-align:right;top:441.22px;font-size:13.8px;font-weight:bold;color:#000;transform:scaleX(0.9239130434782609);transform-origin:100% 50%;">435,421</div>
<div class="t" style="left:28px;top:470.22px;font-size:13.8px;font-weight:bold;color:#1F3A8C;transform:scaleX(0.9438);transform-origin:0 50%;">LIABILITIES</div>
<div class="t" style="left:44px;top:492.22px;font-size:13.8px;font-weight:normal;color:#000;transform:scaleX(0.9448550724637679);transform-origin:0 50%;">Accrued Operating Expenses</div>
<div class="t" style="left:195px;width:400px;text-align:right;top:492.22px;font-size:13.8px;font-weight:normal;color:#000;transform:scaleX(0.9130434782608695);transform-origin:100% 50%;">1,010</div>
<div class="t" style="left:445px;width:400px;text-align:right;top:492.22px;font-size:13.8px;font-weight:normal;color:#000;transform:scaleX(0.9130434782608695);transform-origin:100% 50%;">1,065</div>
<div class="t" style="left:695px;width:400px;text-align:right;top:492.22px;font-size:13.8px;font-weight:normal;color:#000;transform:scaleX(0.9130434782608695);transform-origin:100% 50%;">1,123</div>
<div class="t" style="left:945px;width:400px;text-align:right;top:492.22px;font-size:13.8px;font-weight:normal;color:#000;transform:scaleX(0.9130434782608695);transform-origin:100% 50%;">1,182</div>
<div class="t" style="left:1195px;width:400px;text-align:right;top:492.22px;font-size:13.8px;font-weight:normal;color:#000;transform:scaleX(0.9130434782608695);transform-origin:100% 50%;">1,243</div>
<div class="t" style="left:1445px;width:400px;text-align:right;top:492.22px;font-size:13.8px;font-weight:normal;color:#000;transform:scaleX(0.9130434782608695);transform-origin:100% 50%;">1,306</div>
<div class="t" style="left:44px;top:513.22px;font-size:13.8px;font-weight:normal;color:#000;transform:scaleX(0.9358115942028985);transform-origin:0 50%;">Investment Management Fees Payable</div>
<div class="t" style="left:195px;width:400px;text-align:right;top:513.22px;font-size:13.8px;font-weight:normal;color:#000;transform:scaleX(0.9130434782608695);transform-origin:100% 50%;">673</div>
<div class="t" style="left:445px;width:400px;text-align:right;top:513.22px;font-size:13.8px;font-weight:normal;color:#000;transform:scaleX(0.9130434782608695);transform-origin:100% 50%;">710</div>
<div class="t" style="left:695px;width:400px;text-align:right;top:513.22px;font-size:13.8px;font-weight:normal;color:#000;transform:scaleX(0.9130434782608695);transform-origin:100% 50%;">748</div>
<div class="t" style="left:945px;width:400px;text-align:right;top:513.22px;font-size:13.8px;font-weight:normal;color:#000;transform:scaleX(0.9130434782608695);transform-origin:100% 50%;">788</div>
<div class="t" style="left:1195px;width:400px;text-align:right;top:513.22px;font-size:13.8px;font-weight:normal;color:#000;transform:scaleX(0.9130434782608695);transform-origin:100% 50%;">829</div>
<div class="t" style="left:1445px;width:400px;text-align:right;top:513.22px;font-size:13.8px;font-weight:normal;color:#000;transform:scaleX(0.9130434782608695);transform-origin:100% 50%;">871</div>
<div class="t" style="left:44px;top:534.22px;font-size:13.8px;font-weight:normal;color:#000;transform:scaleX(0.9420289855072463);transform-origin:0 50%;">Distributions Payable (1-month lag)</div>
<div class="t" style="left:195px;width:400px;text-align:right;top:534.22px;font-size:13.8px;font-weight:normal;color:#000;transform:scaleX(0.9130434782608695);transform-origin:100% 50%;">1,000</div>
<div class="t" style="left:445px;width:400px;text-align:right;top:534.22px;font-size:13.8px;font-weight:normal;color:#000;transform:scaleX(0.9130434782608695);transform-origin:100% 50%;">1,078</div>
<div class="t" style="left:695px;width:400px;text-align:right;top:534.22px;font-size:13.8px;font-weight:normal;color:#000;transform:scaleX(0.9130434782608695);transform-origin:100% 50%;">1,137</div>
<div class="t" style="left:945px;width:400px;text-align:right;top:534.22px;font-size:13.8px;font-weight:normal;color:#000;transform:scaleX(0.9130434782608695);transform-origin:100% 50%;">1,198</div>
<div class="t" style="left:1195px;width:400px;text-align:right;top:534.22px;font-size:13.8px;font-weight:normal;color:#000;transform:scaleX(0.9130434782608695);transform-origin:100% 50%;">1,261</div>
<div class="t" style="left:1445px;width:400px;text-align:right;top:534.22px;font-size:13.8px;font-weight:normal;color:#000;transform:scaleX(0.9130434782608695);transform-origin:100% 50%;">1,327</div>
<div class="t" style="left:44px;top:555.22px;font-size:13.8px;font-weight:normal;color:#000;transform:scaleX(0.9132971014492753);transform-origin:0 50%;">Deferred Revenue / Grants Received</div>
<div class="t" style="left:195px;width:400px;text-align:right;top:555.22px;font-size:13.8px;font-weight:normal;color:#000;transform:scaleX(0.9130434782608695);transform-origin:100% 50%;">188</div>
<div class="t" style="left:445px;width:400px;text-align:right;top:555.22px;font-size:13.8px;font-weight:normal;color:#000;transform:scaleX(0.9130434782608695);transform-origin:100% 50%;">202</div>
<div class="t" style="left:695px;width:400px;text-align:right;top:555.22px;font-size:13.8px;font-weight:normal;color:#000;transform:scaleX(0.9130434782608695);transform-origin:100% 50%;">213</div>
<div class="t" style="left:945px;width:400px;text-align:right;top:555.22px;font-size:13.8px;font-weight:normal;color:#000;transform:scaleX(0.9130434782608695);transform-origin:100% 50%;">225</div>
<div class="t" style="left:1195px;width:400px;text-align:right;top:555.22px;font-size:13.8px;font-weight:normal;color:#000;transform:scaleX(0.9130434782608695);transform-origin:100% 50%;">236</div>
<div class="t" style="left:1445px;width:400px;text-align:right;top:555.22px;font-size:13.8px;font-weight:normal;color:#000;transform:scaleX(0.9130434782608695);transform-origin:100% 50%;">249</div>
<div class="t" style="left:44px;top:576.22px;font-size:13.8px;font-weight:normal;color:#000;transform:scaleX(0.9459855072463768);transform-origin:0 50%;">Credit Facility Drawn</div>
<div style="position:absolute;left:591px;top:586px;width:4px;height:1px;background:#000;"></div>
<div style="position:absolute;left:841px;top:586px;width:4px;height:1px;background:#000;"></div>
<div style="position:absolute;left:1091px;top:586px;width:4px;height:1px;background:#000;"></div>
<div style="position:absolute;left:1341px;top:586px;width:4px;height:1px;background:#000;"></div>
<div style="position:absolute;left:1591px;top:586px;width:4px;height:1px;background:#000;"></div>
<div style="position:absolute;left:1841px;top:586px;width:4px;height:1px;background:#000;"></div>
<div class="t" style="left:44px;top:597.22px;font-size:13.8px;font-weight:normal;color:#000;transform:scaleX(0.9487173913043478);transform-origin:0 50%;">Other Accrued Liabilities</div>
<div class="t" style="left:195px;width:400px;text-align:right;top:597.22px;font-size:13.8px;font-weight:normal;color:#000;transform:scaleX(0.9130434782608695);transform-origin:100% 50%;">337</div>
<div class="t" style="left:445px;width:400px;text-align:right;top:597.22px;font-size:13.8px;font-weight:normal;color:#000;transform:scaleX(0.9130434782608695);transform-origin:100% 50%;">355</div>
<div class="t" style="left:695px;width:400px;text-align:right;top:597.22px;font-size:13.8px;font-weight:normal;color:#000;transform:scaleX(0.9130434782608695);transform-origin:100% 50%;">374</div>
<div class="t" style="left:945px;width:400px;text-align:right;top:597.22px;font-size:13.8px;font-weight:normal;color:#000;transform:scaleX(0.9130434782608695);transform-origin:100% 50%;">394</div>
<div class="t" style="left:1195px;width:400px;text-align:right;top:597.22px;font-size:13.8px;font-weight:normal;color:#000;transform:scaleX(0.9130434782608695);transform-origin:100% 50%;">414</div>
<div class="t" style="left:1445px;width:400px;text-align:right;top:597.22px;font-size:13.8px;font-weight:normal;color:#000;transform:scaleX(0.9130434782608695);transform-origin:100% 50%;">435</div>
<div class="t" style="left:28px;top:618.22px;font-size:13.8px;font-weight:bold;color:#000;transform:scaleX(0.9565217391304347);transform-origin:0 50%;">TOTAL LIABILITIES</div>
<div class="t" style="left:195px;width:400px;text-align:right;top:618.22px;font-size:13.8px;font-weight:bold;color:#000;transform:scaleX(0.9239130434782609);transform-origin:100% 50%;">2,683</div>
<div class="t" style="left:445px;width:400px;text-align:right;top:618.22px;font-size:13.8px;font-weight:bold;color:#000;transform:scaleX(0.9239130434782609);transform-origin:100% 50%;">2,853</div>
<div class="t" style="left:695px;width:400px;text-align:right;top:618.22px;font-size:13.8px;font-weight:bold;color:#000;transform:scaleX(0.9239130434782609);transform-origin:100% 50%;">3,008</div>
<div class="t" style="left:945px;width:400px;text-align:right;top:618.22px;font-size:13.8px;font-weight:bold;color:#000;transform:scaleX(0.9239130434782609);transform-origin:100% 50%;">3,168</div>
<div class="t" style="left:1195px;width:400px;text-align:right;top:618.22px;font-size:13.8px;font-weight:bold;color:#000;transform:scaleX(0.9239130434782609);transform-origin:100% 50%;">3,333</div>
<div class="t" style="left:1445px;width:400px;text-align:right;top:618.22px;font-size:13.8px;font-weight:bold;color:#000;transform:scaleX(0.9239130434782609);transform-origin:100% 50%;">3,504</div>
<div class="t" style="left:28px;top:647.22px;font-size:13.8px;font-weight:bold;color:#1F3A8C;transform:scaleX(0.9565217391304347);transform-origin:0 50%;">NET ASSETS (Foundation Capital)</div>
<div class="t" style="left:44px;top:669.22px;font-size:13.8px;font-weight:normal;color:#000;transform:scaleX(0.9368478260869566);transform-origin:0 50%;">Permanent Endowment Capital</div>
<div class="t" style="left:195px;width:400px;text-align:right;top:669.22px;font-size:13.8px;font-weight:normal;color:#000;transform:scaleX(0.9130434782608695);transform-origin:100% 50%;">227,270</div>
<div class="t" style="left:445px;width:400px;text-align:right;top:669.22px;font-size:13.8px;font-weight:normal;color:#000;transform:scaleX(0.9130434782608695);transform-origin:100% 50%;">235,661</div>
<div class="t" style="left:695px;width:400px;text-align:right;top:669.22px;font-size:13.8px;font-weight:normal;color:#000;transform:scaleX(0.9130434782608695);transform-origin:100% 50%;">244,268</div>
<div class="t" style="left:945px;width:400px;text-align:right;top:669.22px;font-size:13.8px;font-weight:normal;color:#000;transform:scaleX(0.9130434782608695);transform-origin:100% 50%;">253,088</div>
<div class="t" style="left:1195px;width:400px;text-align:right;top:669.22px;font-size:13.8px;font-weight:normal;color:#000;transform:scaleX(0.9130434782608695);transform-origin:100% 50%;">262,129</div>
<div class="t" style="left:1445px;width:400px;text-align:right;top:669.22px;font-size:13.8px;font-weight:normal;color:#000;transform:scaleX(0.9130434782608695);transform-origin:100% 50%;">271,388</div>
<div class="t" style="left:44px;top:690.22px;font-size:13.8px;font-weight:normal;color:#000;transform:scaleX(0.9564420289855073);transform-origin:0 50%;">Temporarily Restricted Net Assets</div>
<div class="t" style="left:195px;width:400px;text-align:right;top:690.22px;font-size:13.8px;font-weight:normal;color:#000;transform:scaleX(0.9130434782608695);transform-origin:100% 50%;">48,701</div>
<div class="t" style="left:445px;width:400px;text-align:right;top:690.22px;font-size:13.8px;font-weight:normal;color:#000;transform:scaleX(0.9130434782608695);transform-origin:100% 50%;">50,499</div>
<div class="t" style="left:695px;width:400px;text-align:right;top:690.22px;font-size:13.8px;font-weight:normal;color:#000;transform:scaleX(0.9130434782608695);transform-origin:100% 50%;">52,343</div>
<div class="t" style="left:945px;width:400px;text-align:right;top:690.22px;font-size:13.8px;font-weight:normal;color:#000;transform:scaleX(0.9130434782608695);transform-origin:100% 50%;">54,233</div>
<div class="t" style="left:1195px;width:400px;text-align:right;top:690.22px;font-size:13.8px;font-weight:normal;color:#000;transform:scaleX(0.9130434782608695);transform-origin:100% 50%;">56,170</div>
<div class="t" style="left:1445px;width:400px;text-align:right;top:690.22px;font-size:13.8px;font-weight:normal;color:#000;transform:scaleX(0.9130434782608695);transform-origin:100% 50%;">58,155</div>
<div class="t" style="left:44px;top:711.22px;font-size:13.8px;font-weight:normal;color:#000;transform:scaleX(0.951355072463768);transform-origin:0 50%;">Unrestricted Net Assets (Board Designated)</div>
<div class="t" style="left:195px;width:400px;text-align:right;top:711.22px;font-size:13.8px;font-weight:normal;color:#000;transform:scaleX(0.9130434782608695);transform-origin:100% 50%;">48,701</div>
<div class="t" style="left:445px;width:400px;text-align:right;top:711.22px;font-size:13.8px;font-weight:normal;color:#000;transform:scaleX(0.9130434782608695);transform-origin:100% 50%;">50,499</div>
<div class="t" style="left:695px;width:400px;text-align:right;top:711.22px;font-size:13.8px;font-weight:normal;color:#000;transform:scaleX(0.9130434782608695);transform-origin:100% 50%;">52,343</div>
<div class="t" style="left:945px;width:400px;text-align:right;top:711.22px;font-size:13.8px;font-weight:normal;color:#000;transform:scaleX(0.9130434782608695);transform-origin:100% 50%;">54,233</div>
<div class="t" style="left:1195px;width:400px;text-align:right;top:711.22px;font-size:13.8px;font-weight:normal;color:#000;transform:scaleX(0.9130434782608695);transform-origin:100% 50%;">56,170</div>
<div class="t" style="left:1445px;width:400px;text-align:right;top:711.22px;font-size:13.8px;font-weight:normal;color:#000;transform:scaleX(0.9130434782608695);transform-origin:100% 50%;">58,155</div>
<div class="t" style="left:28px;top:732.22px;font-size:13.8px;font-weight:bold;color:#000;transform:scaleX(0.952791304347826);transform-origin:0 50%;">TOTAL NET ASSETS</div>
<div class="t" style="left:195px;width:400px;text-align:right;top:732.22px;font-size:13.8px;font-weight:bold;color:#000;transform:scaleX(0.9239130434782609);transform-origin:100% 50%;">333,983</div>
<div class="t" style="left:445px;width:400px;text-align:right;top:732.22px;font-size:13.8px;font-weight:bold;color:#000;transform:scaleX(0.9239130434782609);transform-origin:100% 50%;">352,292</div>
<div class="t" style="left:695px;width:400px;text-align:right;top:732.22px;font-size:13.8px;font-weight:bold;color:#000;transform:scaleX(0.9239130434782609);transform-origin:100% 50%;">371,238</div>
<div class="t" style="left:945px;width:400px;text-align:right;top:732.22px;font-size:13.8px;font-weight:bold;color:#000;transform:scaleX(0.9239130434782609);transform-origin:100% 50%;">390,814</div>
<div class="t" style="left:1195px;width:400px;text-align:right;top:732.22px;font-size:13.8px;font-weight:bold;color:#000;transform:scaleX(0.9239130434782609);transform-origin:100% 50%;">411,037</div>
<div class="t" style="left:1445px;width:400px;text-align:right;top:732.22px;font-size:13.8px;font-weight:bold;color:#000;transform:scaleX(0.9239130434782609);transform-origin:100% 50%;">431,917</div>
<div class="t" style="left:28px;top:762.22px;font-size:13.8px;font-weight:bold;color:#000;transform:scaleX(0.9427478260869564);transform-origin:0 50%;">TOTAL LIABILITIES + NET ASSETS (CHECK)</div>
<div class="t" style="left:195px;width:400px;text-align:right;top:762.22px;font-size:13.8px;font-weight:bold;color:#000;transform:scaleX(0.9239130434782609);transform-origin:100% 50%;">336,666</div>
<div class="t" style="left:445px;width:400px;text-align:right;top:762.22px;font-size:13.8px;font-weight:bold;color:#000;transform:scaleX(0.9239130434782609);transform-origin:100% 50%;">355,145</div>
<div class="t" style="left:695px;width:400px;text-align:right;top:762.22px;font-size:13.8px;font-weight:bold;color:#000;transform:scaleX(0.9239130434782609);transform-origin:100% 50%;">374,246</div>
<div class="t" style="left:945px;width:400px;text-align:right;top:762.22px;font-size:13.8px;font-weight:bold;color:#000;transform:scaleX(0.9239130434782609);transform-origin:100% 50%;">393,982</div>
<div class="t" style="left:1195px;width:400px;text-align:right;top:762.22px;font-size:13.8px;font-weight:bold;color:#000;transform:scaleX(0.9239130434782609);transform-origin:100% 50%;">414,370</div>
<div class="t" style="left:1445px;width:400px;text-align:right;top:762.22px;font-size:13.8px;font-weight:bold;color:#000;transform:scaleX(0.9239130434782609);transform-origin:100% 50%;">435,421</div>
<div class="t" style="left:28px;top:783.22px;font-size:13.8px;font-weight:bold;color:#0F6E14;transform:scaleX(0.9520260869565217);transform-origin:0 50%;">Balance Sheet CHECK (must be 0)</div>
<div style="position:absolute;left:591px;top:794px;width:4px;height:1px;background:#0F6E14;"></div>
<div style="position:absolute;left:841px;top:794px;width:4px;height:1px;background:#0F6E14;"></div>
<div style="position:absolute;left:1091px;top:794px;width:4px;height:1px;background:#0F6E14;"></div>
<div style="position:absolute;left:1341px;top:794px;width:4px;height:1px;background:#0F6E14;"></div>
<div style="position:absolute;left:1591px;top:794px;width:4px;height:1px;background:#0F6E14;"></div>
<div style="position:absolute;left:1841px;top:794px;width:4px;height:1px;background:#0F6E14;"></div>
<div class="t" style="left:28px;top:812.22px;font-size:13.8px;font-weight:bold;color:#1F3A8C;transform:scaleX(0.9241913043478259);transform-origin:0 50%;">KEY BALANCE SHEET RATIOS</div>
<div class="t" style="left:28px;top:834.22px;font-size:13.8px;font-weight:normal;color:#000;transform:scaleX(0.9717028985507247);transform-origin:0 50%;">Debt / Total Assets</div>
<div style="position:absolute;left:591px;top:844px;width:4px;height:1px;background:#000;"></div>
<div style="position:absolute;left:841px;top:844px;width:4px;height:1px;background:#000;"></div>
<div style="position:absolute;left:1091px;top:844px;width:4px;height:1px;background:#000;"></div>
<div style="position:absolute;left:1341px;top:844px;width:4px;height:1px;background:#000;"></div>
<div style="position:absolute;left:1591px;top:844px;width:4px;height:1px;background:#000;"></div>
<div style="position:absolute;left:1841px;top:844px;width:4px;height:1px;background:#000;"></div>
<div class="t" style="left:28px;top:855.22px;font-size:13.8px;font-weight:normal;color:#000;transform:scaleX(0.978391304347826);transform-origin:0 50%;">Net Assets / Total Assets (Solvency)</div>
<div class="t" style="left:195px;width:400px;text-align:right;top:855.22px;font-size:13.8px;font-weight:normal;color:#000;transform:scaleX(0.9130434782608695);transform-origin:100% 50%;">99.2%</div>
<div class="t" style="left:445px;width:400px;text-align:right;top:855.22px;font-size:13.8px;font-weight:normal;color:#000;transform:scaleX(0.9130434782608695);transform-origin:100% 50%;">99.2%</div>
<div class="t" style="left:695px;width:400px;text-align:right;top:855.22px;font-size:13.8px;font-weight:normal;color:#000;transform:scaleX(0.9130434782608695);transform-origin:100% 50%;">99.2%</div>
<div class="t" style="left:945px;width:400px;text-align:right;top:855.22px;font-size:13.8px;font-weight:normal;color:#000;transform:scaleX(0.9130434782608695);transform-origin:100% 50%;">99.2%</div>
<div class="t" style="left:1195px;width:400px;text-align:right;top:855.22px;font-size:13.8px;font-weight:normal;color:#000;transform:scaleX(0.9130434782608695);transform-origin:100% 50%;">99.2%</div>
<div class="t" style="left:1445px;width:400px;text-align:right;top:855.22px;font-size:13.8px;font-weight:normal;color:#000;transform:scaleX(0.9130434782608695);transform-origin:100% 50%;">99.2%</div>
<div class="t" style="left:28px;top:876.22px;font-size:13.8px;font-weight:normal;color:#000;transform:scaleX(0.981123188405797);transform-origin:0 50%;">Illiquid Assets / Total Assets</div>
<div class="t" style="left:195px;width:400px;text-align:right;top:876.22px;font-size:13.8px;font-weight:normal;color:#000;transform:scaleX(0.9130434782608695);transform-origin:100% 50%;">20.0%</div>
<div class="t" style="left:445px;width:400px;text-align:right;top:876.22px;font-size:13.8px;font-weight:normal;color:#000;transform:scaleX(0.9130434782608695);transform-origin:100% 50%;">20.0%</div>
<div class="t" style="left:695px;width:400px;text-align:right;top:876.22px;font-size:13.8px;font-weight:normal;color:#000;transform:scaleX(0.9130434782608695);transform-origin:100% 50%;">20.0%</div>
<div class="t" style="left:945px;width:400px;text-align:right;top:876.22px;font-size:13.8px;font-weight:normal;color:#000;transform:scaleX(0.9130434782608695);transform-origin:100% 50%;">20.0%</div>
<div class="t" style="left:1195px;width:400px;text-align:right;top:876.22px;font-size:13.8px;font-weight:normal;color:#000;transform:scaleX(0.9130434782608695);transform-origin:100% 50%;">20.0%</div>
<div class="t" style="left:1445px;width:400px;text-align:right;top:876.22px;font-size:13.8px;font-weight:normal;color:#000;transform:scaleX(0.9130434782608695);transform-origin:100% 50%;">20.0%</div>
<div style="position:absolute;left:26px;top:23px;width:1821px;height:1px;background:#E4E1E1;"></div>
<div style="position:absolute;left:23px;top:26px;width:1px;height:36px;background:#E4E1E1;"></div>
<div style="position:absolute;left:24px;top:24px;width:1825px;height:2px;background:#106D38;"></div>
<div style="position:absolute;left:24px;top:24px;width:2px;height:40px;background:#106D38;"></div>
<div style="position:absolute;left:24px;top:62px;width:1820px;height:2px;background:#106D38;"></div>
<div style="position:absolute;left:1847px;top:24px;width:2px;height:35px;background:#106D38;"></div>
<div style="position:absolute;left:26px;top:26px;width:1821px;height:1px;background:#FFFFFF;"></div>
<div style="position:absolute;left:26px;top:26px;width:1px;height:36px;background:#FFFFFF;"></div>
<div style="position:absolute;left:26px;top:61px;width:1821px;height:1px;background:#FFFFFF;"></div>
<div style="position:absolute;left:1846px;top:26px;width:1px;height:36px;background:#FFFFFF;"></div>
<div style="position:absolute;left:1844px;top:59px;width:7px;height:7px;background:#FFFFFF;"></div>
<div style="position:absolute;left:1845px;top:60px;width:5px;height:5px;background:#1F7040;"></div>
<div style="position:absolute;left:347px;top:6px;width:1px;height:100px;background:#9B9B9B;"></div>
<div style="position:absolute;left:1895px;top:0px;width:25px;height:906px;background:#E6E6E6;"></div>
<div style="position:absolute;left:1898px;top:8px;width:19px;height:19px;background:#FFFFFF;box-sizing:border-box;border:1px solid #A0A0A0"></div>
<svg style="position:absolute;left:1898px;top:8px" width="19" height="19"><polygon points="5,11 9.5,6 14,11" fill="#222"/></svg>
<div style="position:absolute;left:1898px;top:27px;width:19px;height:839px;background:#FFFFFF;box-sizing:border-box;border:1px solid #A0A0A0"></div>
<div style="position:absolute;left:1898px;top:866px;width:19px;height:21px;background:#F0F0F0;"></div>
<div style="position:absolute;left:1898px;top:887px;width:19px;height:19px;background:#FFFFFF;box-sizing:border-box;border:1px solid #A0A0A0"></div>
<svg style="position:absolute;left:1898px;top:887px" width="19" height="19"><polygon points="5,8 14,8 9.5,13" fill="#222"/></svg>
<div style="position:absolute;left:1920px;top:0px;width:1px;height:966px;background:#333333;"></div>
<div style="position:absolute;left:0px;top:906px;width:1895px;height:1px;background:#A0A0A0;"></div>
<div style="position:absolute;left:0px;top:907px;width:1920px;height:31px;background:#E6E6E6;"></div>
<div style="position:absolute;left:0px;top:938px;width:1920px;height:1px;background:#C8C8C8;"></div>
<svg style="position:absolute;left:28px;top:916px" width="45" height="14"><polygon points="7,2 7,11 2,6.5" fill="#BDBDBD"/><polygon points="34,2 34,11 39,6.5" fill="#106B37"/></svg>
<div style="position:absolute;left:112px;top:910px;width:1px;height:24px;background:#A8A8A8;"></div>
<div style="position:absolute;left:115px;top:909px;width:109px;height:26px;background:#00B0F0;"></div>
<div class="t" style="left:-31.5px;width:400px;text-align:center;top:911.46px;font-size:16px;font-weight:normal;color:#111;transform:scaleX(1.0060240963855422);transform-origin:50% 50%;">Cover_slide</div>
<div style="position:absolute;left:226px;top:910px;width:1px;height:24px;background:#A8A8A8;"></div>
<div class="t" style="left:80.0px;width:400px;text-align:center;top:911.46px;font-size:16px;font-weight:normal;color:#444;transform:scaleX(1.0432432432432432);transform-origin:50% 50%;">Dislcaimer</div>
<div style="position:absolute;left:334px;top:910px;width:1px;height:24px;background:#A8A8A8;"></div>
<div style="position:absolute;left:337px;top:909px;width:121px;height:26px;background:#C9A84C;"></div>
<div class="t" style="left:196.8px;width:400px;text-align:center;top:911.46px;font-size:16px;font-weight:normal;color:#111;transform:scaleX(1.0516483516483517);transform-origin:50% 50%;">Assumptions</div>
<div style="position:absolute;left:460px;top:910px;width:1px;height:24px;background:#A8A8A8;"></div>
<div style="position:absolute;left:463px;top:909px;width:166px;height:26px;background:#1F3A7A;"></div>
<div class="t" style="left:345.4px;width:400px;text-align:center;top:911.46px;font-size:16px;font-weight:normal;color:#FFF;transform:scaleX(1.0798449612403103);transform-origin:50% 50%;">Income Statement</div>
<div style="position:absolute;left:631px;top:906px;width:136px;height:29px;background:#FFFFFF;box-sizing:border-box;border-left:1px solid #A0A0A0;border-right:1px solid #A0A0A0"></div>
<div style="position:absolute;left:634px;top:910px;width:130px;height:22px;background:linear-gradient(#FFFFFF,#A3ADCC);"></div>
<div style="position:absolute;left:631px;top:933px;width:136px;height:2px;background:#137040;"></div>
<div class="t" style="left:498.9px;width:400px;text-align:center;top:911.46px;font-size:16px;font-weight:bold;color:#1E7145;transform:scaleX(1.0203703703703704);transform-origin:50% 50%;">Balance Sheet</div>
<div style="position:absolute;left:769px;top:909px;width:188px;height:26px;background:#1F3A7A;"></div>
<div class="t" style="left:662.0px;width:400px;text-align:center;top:911.46px;font-size:16px;font-weight:normal;color:#FFF;transform:scaleX(1.0473684210526315);transform-origin:50% 50%;">Cash Flow Statement</div>
<div style="position:absolute;left:959px;top:910px;width:1px;height:24px;background:#A8A8A8;"></div>
<div style="position:absolute;left:962px;top:909px;width:184px;height:26px;background:#27AE60;"></div>
<div class="t" style="left:853.8px;width:400px;text-align:center;top:911.46px;font-size:16px;font-weight:normal;color:#111;transform:scaleX(1.0928571428571427);transform-origin:50% 50%;">Investment Portfolio</div>
<div style="position:absolute;left:1148px;top:910px;width:1px;height:24px;background:#A8A8A8;"></div>
<div style="position:absolute;left:1151px;top:909px;width:191px;height:26px;background:#16A085;"></div>
<div class="t" style="left:1046.2px;width:400px;text-align:center;top:911.46px;font-size:16px;font-weight:normal;color:#FFF;transform:scaleX(1.0993197278911564);transform-origin:50% 50%;">Capital Contributions</div>
<div style="position:absolute;left:1344px;top:910px;width:1px;height:24px;background:#A8A8A8;"></div>
<div style="position:absolute;left:1347px;top:909px;width:172px;height:26px;background:#E67E22;"></div>
<div class="t" style="left:1232.2px;width:400px;text-align:center;top:911.46px;font-size:16px;font-weight:normal;color:#111;transform:scaleX(1.1111111111111112);transform-origin:50% 50%;">Distribution Model</div>
<div style="position:absolute;left:1521px;top:910px;width:1px;height:24px;background:#A8A8A8;"></div>
<div style="position:absolute;left:1524px;top:909px;width:166px;height:26px;background:#8E44AD;"></div>
<div class="t" style="left:1411.0px;width:400px;text-align:center;top:911.46px;font-size:16px;font-weight:normal;color:#FFF;transform:scaleX(1.0416666666666667);transform-origin:50% 50%;">Operating Expenses</div>
<div style="position:absolute;left:1700px;top:924px;width:2px;height:2px;background:#106B37;"></div>
<div style="position:absolute;left:1705px;top:924px;width:2px;height:2px;background:#106B37;"></div>
<div style="position:absolute;left:1710px;top:924px;width:2px;height:2px;background:#106B37;"></div>
<svg style="position:absolute;left:1727px;top:912px" width="22" height="22"><circle cx="11" cy="11" r="9.5" fill="none" stroke="#707070" stroke-width="1.2"/><rect x="6" y="10.4" width="10" height="1.4" fill="#707070"/><rect x="10.3" y="6" width="1.4" height="10" fill="#707070"/></svg>
<div style="position:absolute;left:1768px;top:916px;width:3px;height:3px;background:#BDBDBD;"></div>
<div style="position:absolute;left:1768px;top:921px;width:3px;height:3px;background:#BDBDBD;"></div>
<div style="position:absolute;left:1768px;top:926px;width:3px;height:3px;background:#BDBDBD;"></div>
<div style="position:absolute;left:1788px;top:913px;width:19px;height:19px;background:#FFFFFF;box-sizing:border-box;border:1px solid #A0A0A0"></div>
<svg style="position:absolute;left:1788px;top:913px" width="19" height="19"><polygon points="11,5 11,14 6,9.5" fill="#222"/></svg>
<div style="position:absolute;left:1807px;top:913px;width:27px;height:19px;background:#F0F0F0;"></div>
<div style="position:absolute;left:1834px;top:913px;width:40px;height:19px;background:#FFFFFF;box-sizing:border-box;border:1px solid #A0A0A0"></div>
<div style="position:absolute;left:1874px;top:913px;width:19px;height:19px;background:#FFFFFF;box-sizing:border-box;border:1px solid #A0A0A0"></div>
<svg style="position:absolute;left:1874px;top:913px" width="19" height="19"><polygon points="8,5 8,14 13,9.5" fill="#222"/></svg>
<div style="position:absolute;left:0px;top:939px;width:1920px;height:26px;background:#F3F3F3;"></div>
<div style="position:absolute;left:0px;top:965px;width:39px;height:1px;background:#8A8580;"></div>
<div style="position:absolute;left:39px;top:965px;width:1200px;height:1px;background:#5C514B;"></div>
<div style="position:absolute;left:1239px;top:965px;width:682px;height:1px;background:#7E828C;"></div>
<div class="t" style="left:14px;top:942.50px;font-size:13px;font-weight:normal;color:#262626;">Ready</div>
<svg style="position:absolute;left:72px;top:940px" width="26" height="24"><rect x="6.5" y="8.5" width="13" height="10" fill="#FFFFFF" stroke="#5F5F5F" stroke-width="1"/><rect x="13" y="5" width="7" height="4" fill="#5F5F5F"/><circle cx="8.3" cy="7.2" r="4.2" fill="#F3F3F3"/><circle cx="8.3" cy="7.2" r="3.4" fill="#5F5F5F"/><g fill="#555"><rect x="12" y="10" width="2" height="1"/><rect x="15" y="10" width="2" height="1"/><rect x="9" y="13" width="2" height="1"/><rect x="12" y="13" width="2" height="1"/><rect x="15" y="13" width="2" height="1"/><rect x="9" y="16" width="2" height="1"/><rect x="12" y="16" width="2" height="1"/><rect x="15" y="16" width="2" height="1"/></g></svg>
<svg style="position:absolute;left:115px;top:943px" width="22" height="20"><path d="M9 3 A7 7 0 1 0 14 15" fill="none" stroke="#555" stroke-width="1.3" stroke-dasharray="3 1.5"/><path d="M9 1 V8 M6.5 6 L9 8.5 L11.5 6 M10 6.5 H15 M13 4.5 L15 6.5 L13 8.5" fill="none" stroke="#555" stroke-width="1.1"/><path d="M11 11 L19 19 M19 11 L11 19" stroke="#444" stroke-width="2.2"/></svg>
<div class="t" style="left:138px;top:942.50px;font-size:13px;font-weight:bold;color:#222;">Accessibility: Investigate</div>
<svg style="position:absolute;left:1400px;top:940px" width="32" height="24"><rect x="9" y="3" width="19" height="13" rx="2" fill="#4F4F4F"/><circle cx="22.5" cy="16.5" r="7" fill="#F3F3F3"/><g transform="translate(22.5,16.5)" fill="#4F4F4F"><circle r="3.9"/><rect x="-1.3" y="-5.6" width="2.6" height="11.2"/><rect x="-1.3" y="-5.6" width="2.6" height="11.2" transform="rotate(60)"/><rect x="-1.3" y="-5.6" width="2.6" height="11.2" transform="rotate(120)"/></g><circle cx="22.5" cy="16.5" r="1.8" fill="#F3F3F3"/><path d="M13 21 L14 19 H18 V21 Z" fill="#4F4F4F"/></svg>
<div class="t" style="left:1430px;top:942.50px;font-size:13px;font-weight:normal;color:#262626;">Display Settings</div>
<div style="position:absolute;left:1547px;top:939px;width:50px;height:26px;background:#C6C6C6;"></div>
<svg style="position:absolute;left:1563px;top:943px" width="18" height="18"><g fill="none" stroke="#666" stroke-width="1"><rect x="1.5" y="1.5" width="15" height="15"/><path d="M6.5 1.5 V16.5 M11.5 1.5 V16.5 M1.5 6.5 H16.5 M1.5 11.5 H16.5"/></g></svg>
<svg style="position:absolute;left:1600px;top:940px" width="90" height="24"><g fill="none" stroke="#666" stroke-width="1"><rect x="13.5" y="4.5" width="16" height="14"/><rect x="17.5" y="6.5" width="8" height="10"/><path d="M19 9.5 H24 M19 11.5 H24 M19 13.5 H24"/><rect x="63.5" y="4.5" width="16" height="15"/><path d="M68.5 4.5 V13.5 M73.5 4.5 V13.5 M63.5 13.5 H73.5"/></g></svg>
<div style="position:absolute;left:1704px;top:951px;width:10px;height:1px;background:#444;"></div>
<div style="position:absolute;left:1720px;top:952px;width:125px;height:1px;background:#444;"></div>
<div style="position:absolute;left:1767px;top:945px;width:6px;height:14px;background:#444;"></div>
<div style="position:absolute;left:1782px;top:949px;width:1px;height:7px;background:#444;"></div>
<div style="position:absolute;left:1851px;top:951px;width:10px;height:1px;background:#444;"></div>
<div style="position:absolute;left:1856px;top:946px;width:1px;height:11px;background:#444;"></div>
<div class="t" style="left:1877px;top:942.50px;font-size:13px;font-weight:normal;color:#262626;">80%</div>
</body></html>
